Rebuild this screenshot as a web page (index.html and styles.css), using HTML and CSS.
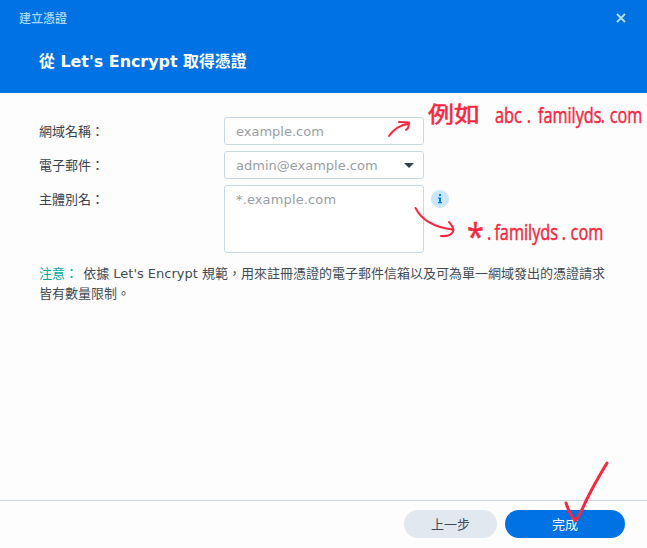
FILE: index.html
```html
<!DOCTYPE html>
<html lang="zh-Hant">
<head>
<meta charset="utf-8">
<title>建立憑證</title>
<link rel="stylesheet" href="styles.css">
</head>
<body>
<div class="dialog">
  <header class="header">
    <div class="titlebar">
      <span class="title">建立憑證</span>
      <button class="close" aria-label="close"><svg width="10" height="10" viewBox="0 0 10 10"><path d="M1 1l8 8M9 1l-8 8"/></svg></button>
    </div>
    <h1>從 Let's Encrypt 取得憑證</h1>
  </header>
  <main class="content">
    <div class="row">
      <label>網域名稱：</label>
      <div class="field">example.com</div>
    </div>
    <div class="row">
      <label>電子郵件：</label>
      <div class="field combo"><span>admin@example.com</span><i class="caret"></i></div>
    </div>
    <div class="row">
      <label>主體別名：</label>
      <div class="field area">*.example.com</div>
      <svg class="info" width="18" height="18" viewBox="0 0 18 18"><circle cx="9" cy="9" r="9"/><path d="M8 4h2v2H8zM7 7.500h3V12h1v1.300H7V12h1V8.800H7z"/></svg>
    </div>
    <p class="note"><span class="tag">注意：</span> 依據 Let's Encrypt 規範，用來註冊憑證的電子郵件信箱以及可為單一網域發出的憑證請求皆有數量限制。</p>
  </main>
  <footer class="footer">
    <button class="btn back">上一步</button>
    <button class="btn done">完成</button>
  </footer>
  <svg class="ink" width="647" height="548" viewBox="0 0 647 548">
    <path d="M389 136C394 129 400 125 408 124M399 122L409 122.500Q409 128 406 130"/>
    <path d="M415.500 208C421 219 434 227 452 229.500M449 222Q453 226 453.500 230Q452 237 441 236"/>
    <path class="check" d="M566 503Q570 515 575 520.500Q578 519 585 503Q593 486 607 463"/>
    <text class="cjk" x="428" y="122" textLength="52" lengthAdjust="spacingAndGlyphs">例如</text>
    <text transform="translate(495 123) scale(.74 1)"><tspan x="0">abc</tspan><tspan x="43">.</tspan><tspan x="58">familyds</tspan><tspan x="143">.</tspan><tspan x="155">com</tspan></text>
    <text class="star" x="467" y="249" textLength="17" lengthAdjust="spacingAndGlyphs">*</text>
    <text transform="translate(487 240) scale(.74 1)"><tspan x="0">.</tspan><tspan x="10">familyds</tspan><tspan x="101">.</tspan><tspan x="113">com</tspan></text>
  </svg>
</div>
</body>
</html>
```
FILE: styles.css
```css
* { box-sizing: border-box; }
body {
  margin: 0;
  font: 13px/20px "DejaVu Sans", "Noto Sans CJK TC", sans-serif;
  color: #414b55;
}
button { border: 0; padding: 0; background: none; font: inherit; }
.dialog {
  position: relative;
  display: flex;
  flex-direction: column;
  width: 647px;
  height: 548px;
  overflow: hidden;
  background: #fdfdfe;
}
.header { height: 93px; background: #0072e3; color: #fff; }
.titlebar {
  display: flex;
  justify-content: space-between;
  align-items: center;
  height: 36px;
  padding: 0 21px 0 19px;
}
.title { padding-top: 1px; font-size: 12px; font-weight: 500; color: #a9dbff; }
.close { display: flex; }
.close svg { fill: none; stroke: #b9e2ff; stroke-width: 1.8; }
h1 {
  margin: 15px 0 0 39px;
  font-size: 15.9px;
  line-height: 21px;
  font-weight: 700;
}
.content { flex: 1; padding: 24px 39px 0; }
.row { display: flex; align-items: flex-start; margin-bottom: 6px; }
label { width: 185px; line-height: 29px; height: 28px; color: #37424c; }
.field {
  width: 200px;
  height: 28px;
  padding: 0 11px;
  border: 1px solid #c6d8e4;
  border-radius: 3px;
  line-height: 27px;
  color: #999ea3;
  background: #fff;
}
.combo { display: flex; justify-content: space-between; align-items: center; padding-right: 9px; }
.caret { border: 5px solid transparent; border-top-color: #31404b; border-bottom: 0; }
.area { height: 68px; letter-spacing: .13px; }
.info { margin: 5px 0 0 7px; fill: #c9e6fb; }
.info path { fill: #087be0; }
.note { margin: 11px 0 0; line-height: 20px; }
.tag { margin-right: 1px; color: #00a89c; }
.footer {
  display: flex;
  justify-content: flex-end;
  gap: 8px;
  height: 48px;
  padding: 9px 22px 0;
  border-top: 1px solid #cfd5dc;
}
.btn { height: 28px; border-radius: 14px; line-height: 29px; }
.back { width: 93px; background: #e2e8f0; color: #414b55; }
.done { width: 120px; background: #0072e3; color: #fff; }
.ink {
  position: absolute;
  inset: 0;
  pointer-events: none;
  fill: none;
  stroke: #f8273d;
  stroke-width: 2;
  stroke-linecap: round;
  stroke-linejoin: round;
}
.ink .check { stroke-width: 3; }
.ink text {
  fill: #f8273d;
  stroke-width: .5;
  font: 22px "Open Sans", sans-serif;
}
.ink .cjk { font: 22px "Noto Sans CJK TC", sans-serif; }
.ink .star { font-size: 36px; }
```
